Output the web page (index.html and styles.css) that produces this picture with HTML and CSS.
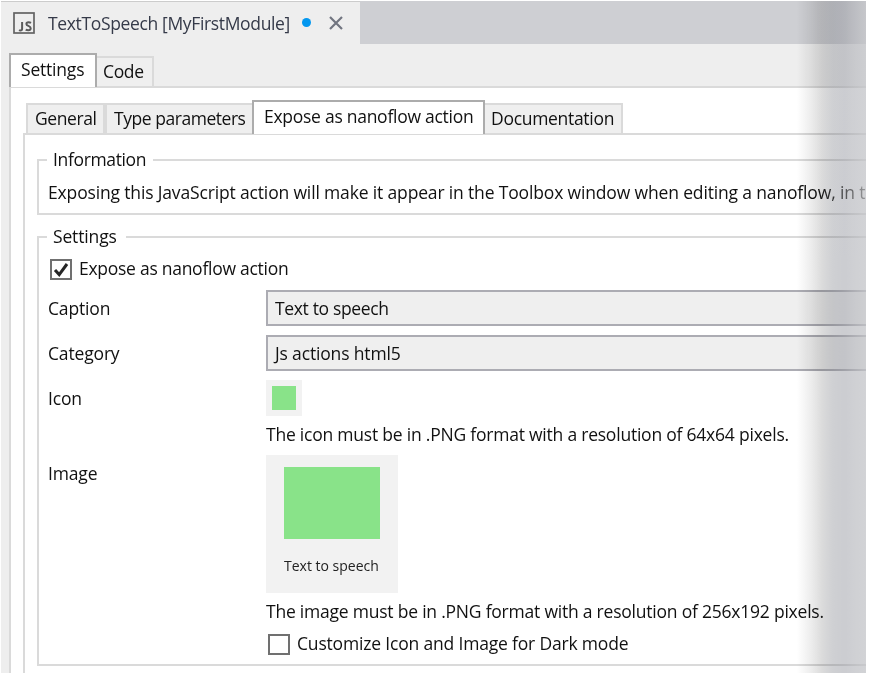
FILE: index.html
```html
<!DOCTYPE html>
<html lang="en">
<head>
<meta charset="utf-8">
<title>TextToSpeech [MyFirstModule]</title>
<link rel="stylesheet" href="styles.css">
</head>
<body>
<div class="window">
  <header class="titlebar">
    <div class="doc-tab">
      <svg class="js-icon" width="22" height="22" viewBox="0 0 22 22"><rect x="1" y="1" width="20" height="20" fill="none" stroke="#636363" stroke-width="1.7"/><path d="M9.1 10v6.700q0 1.700-1.700 1.700-.8 0-1.400-.3M18 10.800q-1-.6-2.500-.6-2.100 0-2.100 1.700 0 1.200 2 2 2.300.9 2.300 2.400 0 2-2.400 2-1.600 0-2.600-.6" fill="none" stroke="#5b5b5b" stroke-width="2"/></svg>
      <span class="doc-title">TextToSpeech [MyFirstModule]</span>
      <i class="dot"></i>
      <svg class="close" width="14" height="14" viewBox="0 0 14 14"><path d="M1 1l12 12M13 1L1 13" stroke="#717580" stroke-width="2.200"/></svg>
    </div>
  </header>
  <nav class="tabs outer-tabs">
    <span class="tab active t-settings">Settings</span>
    <span class="tab t-code">Code</span>
  </nav>
  <section class="outer-panel">
    <nav class="tabs inner-tabs">
      <span class="tab t-general">General</span>
      <span class="tab t-types">Type parameters</span>
      <span class="tab active t-expose">Expose as nanoflow action</span>
      <span class="tab t-docs">Documentation</span>
    </nav>
    <div class="inner-panel">
      <div class="group info">
        <div class="legend"><span class="l-info">Information</span></div>
        <p class="description">Exposing this JavaScript action will make it appear in the Toolbox window when editing a nanoflow, in th</p>
      </div>
      <div class="group settings">
        <div class="legend"><span class="l-settings">Settings</span></div>
        <div class="check expose"><i class="box"><svg width="18" height="17" viewBox="0 0 18 17"><path d="M3 9l4.200 4.600L15 3" fill="none" stroke="#262626" stroke-width="3"/></svg></i><span class="s-expose">Expose as nanoflow action</span></div>
        <div class="row"><span class="s-caption">Caption</span><div class="input"><span class="s-speech">Text to speech</span></div></div>
        <div class="row"><span class="s-category">Category</span><div class="input"><span class="s-js">Js actions html5</span></div></div>
        <div class="row icon-row"><span class="s-icon">Icon</span><div class="icon-box"><i></i></div></div>
        <p class="hint">The icon must be in .PNG format with a resolution of 64x64 pixels.</p>
        <div class="row image-row"><span class="s-image">Image</span><div class="image-box"><i></i><small>Text to speech</small></div></div>
        <p class="hint">The image must be in .PNG format with a resolution of 256x192 pixels.</p>
        <div class="check dark"><i class="box"></i><span class="s-dark">Customize Icon and Image for Dark mode</span></div>
      </div>
    </div>
  </section>
  <div class="edge-shade"></div>
  <div class="edge-fade"></div>
</div>
</body>
</html>
```
FILE: styles.css
```css
* { box-sizing: border-box; }
body { margin: 0; background: #fff; font: 17.5px/24px "Open Sans", "Noto Sans", sans-serif; color: #111; overflow: hidden; letter-spacing: -0.35px; }
p { margin: 0; }
i { display: block; }
span, p, small { white-space: nowrap; }
.window { position: relative; width: 865px; height: 672px; margin: 1px 0 0 1px; background: #eee; overflow: hidden; }
.titlebar { height: 43px; background: #cecfd3; }
.doc-tab { width: 359px; height: 43px; border-top: 1px solid #ccc; background: #eee; display: flex; align-items: center; padding: 0 0 1px 12px; color: #353a49; }
.doc-title { width: 242px; margin-left: 13px; }
.dot { width: 9px; height: 9px; border-radius: 50%; background: #0397ef; margin: 0 0 0 12px; }
.close { margin-left: 18px; }
.tabs { display: flex; align-items: flex-end; position: relative; }
.tab { height: 30px; background: #efefef; border: 2px solid #dadada; border-bottom: 0; padding: 1px 0 0 6px; }
.tab.active { height: 34px; background: #fff; border-color: #acacac; padding: 2px 0 0 10px; }
.outer-tabs { height: 43px; padding-left: 8px; }
.tab.t-settings { width: 88px; letter-spacing: -0.2px; }
.t-code { width: 57px; border-left: 0; }
.outer-tabs .tab:not(.active) { margin-bottom: 1px; }
.outer-panel { margin: -1px 0 0 8px; height: 600px; border: solid #dadada; border-width: 2px 0 0 2px; background: #fff; padding: 12px 0 0 12px; }
.inner-tabs { height: 35px; padding-left: 3px; }
.inner-tabs .tab { margin-bottom: 2px; }
.inner-tabs .tab.active { margin-bottom: 1px; }
.t-general { width: 79px; padding-left: 7px; letter-spacing: -0.4px; }
.t-types { width: 147px; border-right: 0; padding-left: 7px; letter-spacing: -0.46px; }
.t-expose { width: 233px; letter-spacing: -0.27px; }
.t-docs { width: 138px; border-left: 0; letter-spacing: -0.3px; }
.inner-panel { margin-top: -2px; height: 560px; border: solid #dadada; border-width: 2px 0 0 2px; padding: 24px 0 0 12px; }
.group { border: 2px solid #dadada; border-right: 0; padding-left: 9px; }
.info { height: 56px; }
.settings { height: 430px; margin-top: 21px; }
.legend { height: 24px; margin-top: -14px; margin-left: -1px; }
.legend span { display: inline-block; background: #fff; padding-left: 6px; }
.l-info { width: 106px; }
.l-settings { width: 79px; letter-spacing: -0.15px; }
.description { margin-top: 9px; letter-spacing: -0.155px; }
.check { display: flex; align-items: center; height: 24px; }
.check span { padding-bottom: 2px; }
.expose { margin: 9px 0 0 2px; }
.box { width: 22px; height: 21px; border: 2px solid #707070; background: #fff; flex: none; margin-right: 7px; }
.box svg { display: block; }
.s-expose { letter-spacing: -0.27px; }
.row { display: flex; height: 36px; margin-top: 9px; line-height: 36px; }
.row > span { width: 218px; flex: none; }
.s-caption, .s-category, .s-icon, .s-image, .s-js { letter-spacing: -0.16px; }
.input { flex: 1; height: 36px; background: #efefef; border: 2px solid #acacb3; border-right: 0; line-height: 32px; padding-left: 7px; }
.icon-box { width: 36px; height: 36px; padding: 6px; background: #f2f2f2; }
.icon-box i { width: 24px; height: 24px; background: #89e389; }
.hint { margin: 6px 0 0 218px; height: 24px; letter-spacing: -0.22px; }
.image-row { height: 138px; margin-top: 9px; }
.image-box { width: 132px; height: 138px; background: #f2f2f2; padding: 12px 18px; }
.image-box i { width: 96px; height: 72px; background: #89e389; }
.image-box small { display: block; font-size: 14px; line-height: 20px; margin-top: 17px; letter-spacing: 0; color: #222; }
.dark { margin: 9px 0 0 220px; }
.s-dark { letter-spacing: -0.18px; }
.edge-shade, .edge-fade { position: absolute; inset: 0 0 0 auto; width: 69px; }
.edge-shade { mix-blend-mode: multiply; background: linear-gradient(90deg, #fff, #ededed 20%, #dcdcdc 36%, #cfd0d3 52%, #c9cacf 70%, #d1d2d5); }
.edge-fade { background: linear-gradient(90deg, rgba(208,209,212,0) 30%, rgba(208,209,212,.3) 65%, rgba(210,211,214,.7)); }
```
